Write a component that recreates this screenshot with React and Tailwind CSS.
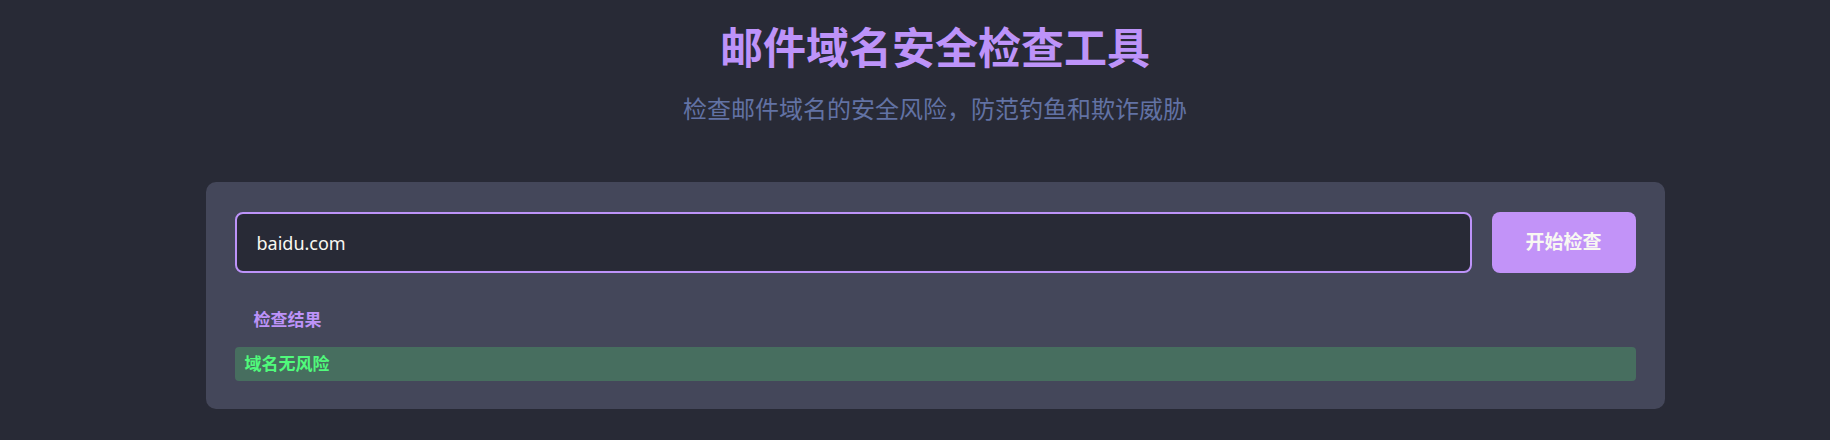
import { useState } from "react";

function App() {
  const [domain, setDomain] = useState("baidu.com");

  return (
    <div className="min-h-screen bg-[#282a36] pl-[40px] font-['Noto_Sans','Noto_Sans_CJK_SC',sans-serif]">
      <header className="pt-[22px] text-center">
        <h1 className="text-[43px] font-bold leading-[52px] text-[#bd93f9]">
          邮件域名安全检查工具
        </h1>
        <p className="mt-[19px] text-[24px] leading-[32px] text-[#6272a4]">
          检查邮件域名的安全风险，防范钓鱼和欺诈威胁
        </p>
      </header>

      <div className="mx-auto mt-[57px] w-[1459px] rounded-[10px] bg-[#44475a] px-[29px] pb-[28px] pt-[30px]">
        <div className="flex gap-[20px]">
          <input
            type="text"
            value={domain}
            onChange={(e) => setDomain(e.target.value)}
            className="h-[61px] flex-1 rounded-[8px] border-2 border-[#bd93f9] bg-[#282a36] px-[20px] text-[18px] text-[#f8f8f2] outline-none"
          />
          <button className="h-[61px] w-[144px] rounded-[8px] bg-[#c293f8] text-[19px] font-bold text-[#f8f8f2]">
            开始检查
          </button>
        </div>

        <div className="mt-[35px]">
          <h3 className="pl-[19px] text-[17px] font-bold leading-[24px] text-[#bd93f9]">
            检查结果
          </h3>
          <div className="mt-[15px] rounded-[4px] bg-[#476e5f] px-[10px] py-[5px] text-[17px] font-bold leading-[24px] text-[#50fa7b]">
            域名无风险
          </div>
        </div>
      </div>
    </div>
  );
}

export default App;
